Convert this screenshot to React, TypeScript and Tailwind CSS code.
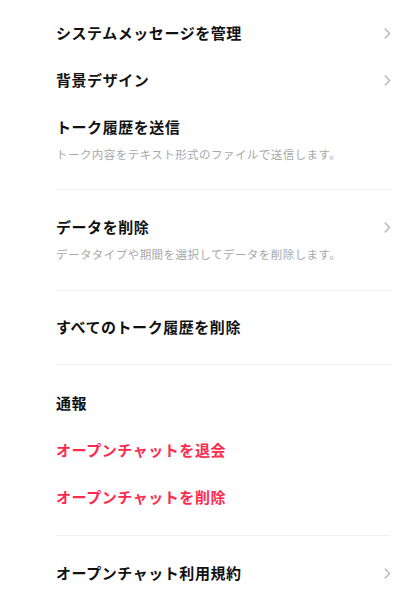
import React from 'react';

const Chevron: React.FC = () => (
  <svg className="w-[7px] h-[11px] text-[#b4b4b4]" viewBox="0 0 7 11" fill="none" stroke="currentColor">
    <path d="M1.2 1l4.4 4.5-4.4 4.5" strokeWidth={1.3} strokeLinecap="round" strokeLinejoin="round" />
  </svg>
);

type RowProps = { title: string; sub?: string; arrow?: boolean; red?: boolean };

const Row: React.FC<RowProps> = ({ title, sub, arrow, red }) => (
  <div>
    <div className="h-[47px] flex items-center justify-between">
      <span className={`text-[15px] font-bold tracking-[0.55px] ${red ? 'text-[#ff2a4c]' : 'text-[#111111]'}`}>{title}</span>
      {arrow && <Chevron />}
    </div>
    {sub && <p className="-mt-[5px] h-[16px] leading-[16px] text-[11.5px] text-[#a8a8a8] tracking-[0.45px]">{sub}</p>}
  </div>
);

const Divider: React.FC = () => <div className="h-px bg-[#f0f0f0]" />;

export default function App() {
  return (
    <div
      className="w-[417px] h-[594px] bg-white overflow-hidden pl-[56px] pr-[26px] pt-[10px]"
      style={{ fontFamily: '"Noto Sans CJK JP", "Noto Sans", sans-serif' }}
    >
      <Row title="システムメッセージを管理" arrow />
      <Row title="背景デザイン" arrow />
      <div className="pb-[27px]">
        <Row title="トーク履歴を送信" sub="トーク内容をテキスト形式のファイルで送信します。" />
      </div>
      <Divider />
      <div className="pt-[14px] pb-[28px]">
        <Row title="データを削除" sub="データタイプや期間を選択してデータを削除します。" arrow />
      </div>
      <Divider />
      <div className="py-[13px]">
        <Row title="すべてのトーク履歴を削除" />
      </div>
      <Divider />
      <div className="pt-[15px] pb-[14px]">
        <Row title="通報" />
        <Row title="オープンチャットを退会" red />
        <Row title="オープンチャットを削除" red />
      </div>
      <Divider />
      <div className="pt-[14px]">
        <Row title="オープンチャット利用規約" arrow />
      </div>
    </div>
  );
}
